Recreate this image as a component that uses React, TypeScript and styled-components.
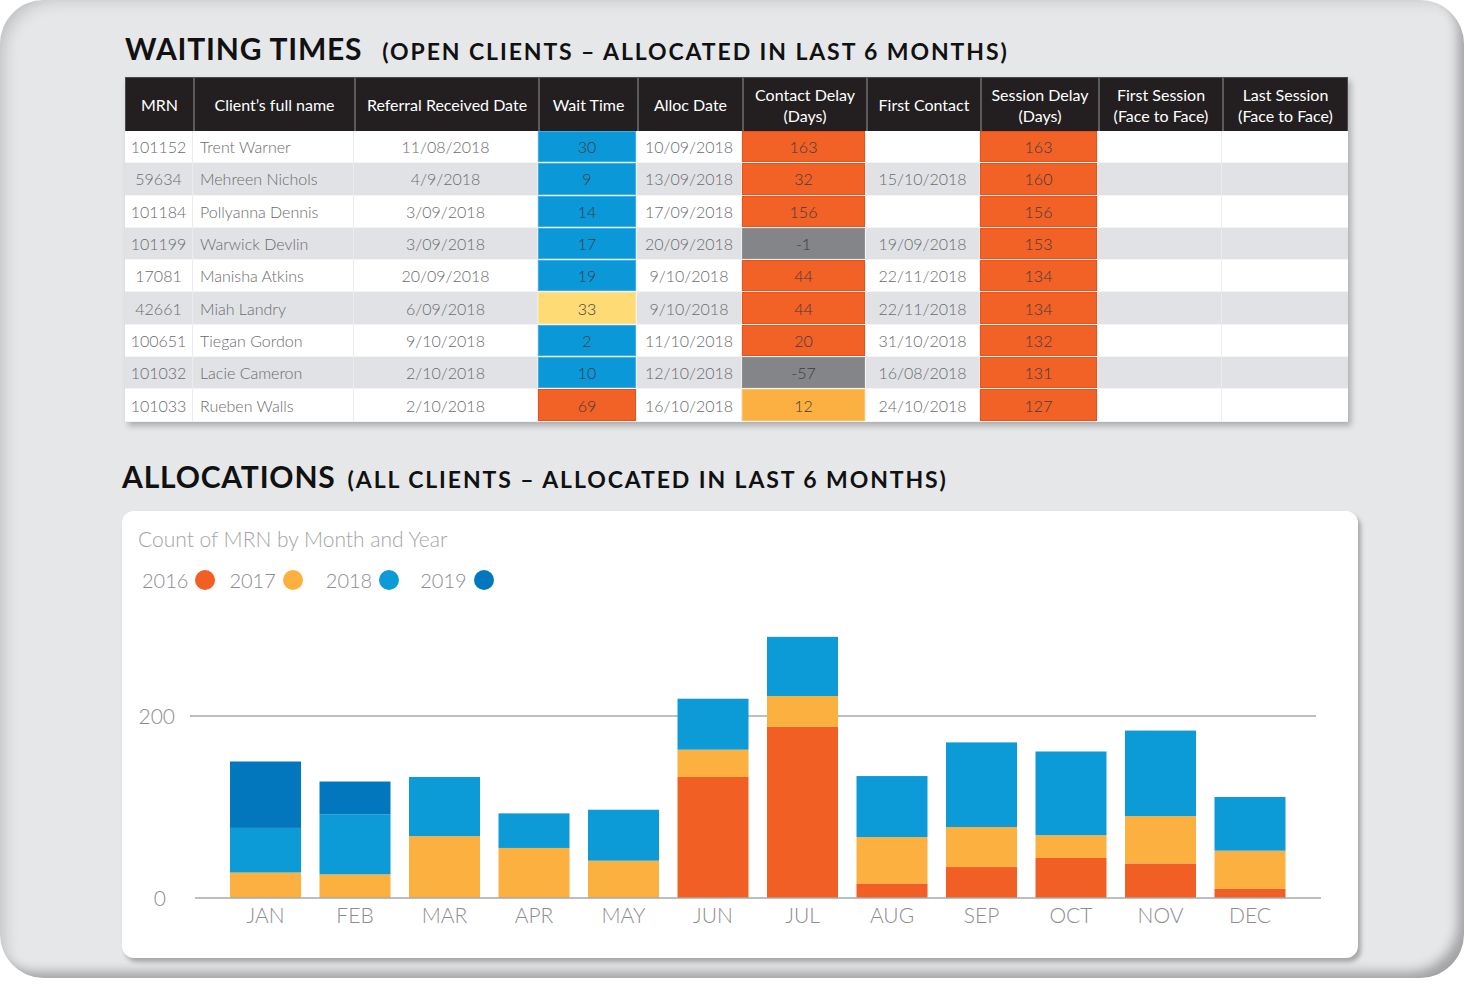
import React from "react";
import styled, { createGlobalStyle } from "styled-components";

const GlobalStyle = createGlobalStyle`
  html, body {
    margin: 0;
    padding: 0;
    background: #ffffff;
  }
  body {
    font-family: Lato, "Open Sans", sans-serif;
  }
`;

type Tone = "blue" | "yellow" | "orange" | "amber" | "grey";

const toneColors: Record<Tone, string> = {
  blue: "#0b98d8",
  yellow: "#fedb75",
  orange: "#f26125",
  amber: "#fbb041",
  grey: "#838588",
};

const toneEdges: Record<Tone, string> = {
  blue: "#3fb0e4",
  yellow: "#fde49a",
  orange: "#e9501a",
  amber: "#fdc15f",
  grey: "#8e9093",
};

type Cell = { value: string; tone?: Tone };

type Row = {
  mrn: string;
  name: string;
  referral: string;
  wait: Cell;
  alloc: string;
  contactDelay: Cell;
  firstContact: string;
  sessionDelay: Cell;
};

const rows: Row[] = [
  { mrn: "101152", name: "Trent Warner", referral: "11/08/2018", wait: { value: "30", tone: "blue" }, alloc: "10/09/2018", contactDelay: { value: "163", tone: "orange" }, firstContact: "", sessionDelay: { value: "163", tone: "orange" } },
  { mrn: "59634", name: "Mehreen Nichols", referral: "4/9/2018", wait: { value: "9", tone: "blue" }, alloc: "13/09/2018", contactDelay: { value: "32", tone: "orange" }, firstContact: "15/10/2018", sessionDelay: { value: "160", tone: "orange" } },
  { mrn: "101184", name: "Pollyanna Dennis", referral: "3/09/2018", wait: { value: "14", tone: "blue" }, alloc: "17/09/2018", contactDelay: { value: "156", tone: "orange" }, firstContact: "", sessionDelay: { value: "156", tone: "orange" } },
  { mrn: "101199", name: "Warwick Devlin", referral: "3/09/2018", wait: { value: "17", tone: "blue" }, alloc: "20/09/2018", contactDelay: { value: "-1", tone: "grey" }, firstContact: "19/09/2018", sessionDelay: { value: "153", tone: "orange" } },
  { mrn: "17081", name: "Manisha Atkins", referral: "20/09/2018", wait: { value: "19", tone: "blue" }, alloc: "9/10/2018", contactDelay: { value: "44", tone: "orange" }, firstContact: "22/11/2018", sessionDelay: { value: "134", tone: "orange" } },
  { mrn: "42661", name: "Miah Landry", referral: "6/09/2018", wait: { value: "33", tone: "yellow" }, alloc: "9/10/2018", contactDelay: { value: "44", tone: "orange" }, firstContact: "22/11/2018", sessionDelay: { value: "134", tone: "orange" } },
  { mrn: "100651", name: "Tiegan Gordon", referral: "9/10/2018", wait: { value: "2", tone: "blue" }, alloc: "11/10/2018", contactDelay: { value: "20", tone: "orange" }, firstContact: "31/10/2018", sessionDelay: { value: "132", tone: "orange" } },
  { mrn: "101032", name: "Lacie Cameron", referral: "2/10/2018", wait: { value: "10", tone: "blue" }, alloc: "12/10/2018", contactDelay: { value: "-57", tone: "grey" }, firstContact: "16/08/2018", sessionDelay: { value: "131", tone: "orange" } },
  { mrn: "101033", name: "Rueben Walls", referral: "2/10/2018", wait: { value: "69", tone: "orange" }, alloc: "16/10/2018", contactDelay: { value: "12", tone: "amber" }, firstContact: "24/10/2018", sessionDelay: { value: "127", tone: "orange" } },
];

const columnWidths = [68, 161, 184, 99, 105, 124, 114, 118, 124, 126];

const Frame = styled.div`
  width: 1464px;
  height: 978px;
  box-sizing: border-box;
  border-radius: 44px;
  background: #e6e7e9;
  box-shadow: inset -12px -12px 12px -6px rgba(0, 0, 0, 0.3),
    inset 12px 8px 18px -10px rgba(0, 0, 0, 0.2);
  padding: 30px 0 0 122px;
`;

const Section = styled.section<{ $indent: number }>`
  margin-left: ${(p) => p.$indent}px;
`;

const Heading = styled.h2<{ $gap: number; $top: number }>`
  margin: ${(p) => p.$top}px 0 0 0;
  display: flex;
  align-items: baseline;
  gap: ${(p) => p.$gap}px;
  font-family: Lato, sans-serif;
  font-weight: 700;
  font-size: 30px;
  line-height: 36px;
  letter-spacing: 0.8px;
  color: #111111;
  text-transform: uppercase;
  white-space: nowrap;
`;

const SubHeading = styled.span`
  font-size: 23px;
  letter-spacing: 1.9px;
`;

const Table = styled.table`
  margin-top: 8px;
  border-collapse: separate;
  border-spacing: 0;
  table-layout: fixed;
  width: 1223px;
  box-shadow: 3px 4px 6px rgba(0, 0, 0, 0.25);
  font-family: Lato, sans-serif;
`;

const HeadCell = styled.th`
  height: 54px;
  box-sizing: border-box;
  padding: 0 2px;
  background: #231f20;
  color: #ffffff;
  font-weight: 400;
  font-size: 16px;
  line-height: 21px;
  text-align: center;
  border-left: 2px solid #5b5b5d;
  border-top: 1px solid #4a4a4a;
  &:first-child {
    border-left: 1px solid #4a4a4a;
  }
  &:last-child {
    border-right: 1px solid #4a4a4a;
  }
`;

const BodyRow = styled.tr<{ $alt: boolean }>`
  height: 32.3px;
  background: ${(p) => (p.$alt ? "#e1e2e5" : "#ffffff")};
`;

const BodyCell = styled.td<{ $tone?: Tone; $align?: "left" | "center" }>`
  box-sizing: border-box;
  padding: ${(p) => (p.$align === "left" ? "0 6px 0 7px" : "0 2px")};
  text-align: ${(p) => p.$align ?? "center"};
  font-size: 16px;
  font-weight: 300;
  color: ${(p) => (p.$tone ? "#3d3d3f" : "#6a6b6e")};
  background: ${(p) => (p.$tone ? toneColors[p.$tone] : "transparent")};
  border-right: 1px solid ${(p) => (p.$tone ? "#f4f4f4" : "#ececec")};
  border-bottom: 1px solid #f4f4f4;
  box-shadow: ${(p) =>
    p.$tone ? `inset 0 0 0 1px ${toneEdges[p.$tone]}` : "none"};
  white-space: nowrap;
  &:last-child {
    border-right: none;
  }
`;

const Card = styled.div`
  margin-top: 14px;
  width: 1236px;
  height: 447px;
  box-sizing: border-box;
  background: #ffffff;
  border-radius: 12px;
  box-shadow: 3px 4px 4px rgba(0, 0, 0, 0.28);
  padding: 15px 0 0 16px;
  font-family: Lato, sans-serif;
`;

const CardTitle = styled.div`
  font-size: 21px;
  line-height: 26px;
  font-weight: 300;
  color: #a3a4a6;
`;

const Legend = styled.div`
  margin: 15px 0 0 4px;
  display: flex;
  align-items: center;
  gap: 14px;
  height: 26px;
`;

const LegendItem = styled.div<{ $shift?: number }>`
  display: flex;
  align-items: center;
  gap: 7px;
  margin-left: ${(p) => p.$shift ?? 0}px;
  font-size: 20px;
  font-weight: 300;
  color: #8c8d90;
`;

const Dot = styled.span<{ $color: string }>`
  width: 20px;
  height: 20px;
  border-radius: 50%;
  background: ${(p) => p.$color};
`;

const Plot = styled.svg`
  display: block;
  margin-top: 7px;
  font-family: Lato, sans-serif;
`;

const yearColors = {
  y2016: "#f15f24",
  y2017: "#fbb040",
  y2018: "#0c9bd7",
  y2019: "#0377bd",
};

const months = [
  { label: "JAN", y2016: 0, y2017: 28, y2018: 49, y2019: 73 },
  { label: "FEB", y2016: 0, y2017: 26, y2018: 66, y2019: 36 },
  { label: "MAR", y2016: 0, y2017: 68, y2018: 65, y2019: 0 },
  { label: "APR", y2016: 0, y2017: 55, y2018: 38, y2019: 0 },
  { label: "MAY", y2016: 0, y2017: 41, y2018: 56, y2019: 0 },
  { label: "JUN", y2016: 133, y2017: 30, y2018: 56, y2019: 0 },
  { label: "JUL", y2016: 188, y2017: 34, y2018: 65, y2019: 0 },
  { label: "AUG", y2016: 16, y2017: 51, y2018: 67, y2019: 0 },
  { label: "SEP", y2016: 34, y2017: 44, y2018: 93, y2019: 0 },
  { label: "OCT", y2016: 44, y2017: 25, y2018: 92, y2019: 0 },
  { label: "NOV", y2016: 38, y2017: 52, y2018: 94, y2019: 0 },
  { label: "DEC", y2016: 10, y2017: 42, y2018: 59, y2019: 0 },
];

const BASE = 298;
const SCALE = 0.91;

const Chart = () => {
  return (
    <Plot width={1220} height={345} viewBox="0 0 1220 345">
      <line x1={52} x2={1178} y1={116} y2={116} stroke="#a7a8aa" strokeWidth={1.5} />
      <text x={37} y={124} textAnchor="end" fontSize={21} fontWeight={300} fill="#8c8d90">
        200
      </text>
      <text x={28} y={306} textAnchor="end" fontSize={21} fontWeight={300} fill="#8c8d90">
        0
      </text>
      {months.map((m, i) => {
        const x = 92 + i * 89.5;
        let y = BASE;
        const segments = (["y2016", "y2017", "y2018", "y2019"] as const).map((key) => {
          const h = m[key] * SCALE;
          y -= h;
          return h > 0 ? (
            <rect key={key} x={x} y={y} width={71} height={h} fill={yearColors[key]} />
          ) : null;
        });
        return (
          <g key={m.label}>
            {segments}
            <text
              x={x + 35.5}
              y={323}
              textAnchor="middle"
              fontSize={21}
              fontWeight={300}
              fill="#8c8d90"
            >
              {m.label}
            </text>
          </g>
        );
      })}
      <line x1={57} x2={1183} y1={BASE} y2={BASE} stroke="#a7a8aa" strokeWidth={1.5} />
    </Plot>
  );
};

export default function App() {
  return (
    <>
      <GlobalStyle />
      <Frame>
        <Section $indent={3}>
          <Heading $gap={20} $top={0}>
            Waiting Times
            <SubHeading>(Open Clients – Allocated in last 6 months)</SubHeading>
          </Heading>
          <Table>
            <colgroup>
              {columnWidths.map((w, i) => (
                <col key={i} style={{ width: w }} />
              ))}
            </colgroup>
            <thead>
              <tr>
                <HeadCell>MRN</HeadCell>
                <HeadCell>Client’s full name</HeadCell>
                <HeadCell>Referral Received Date</HeadCell>
                <HeadCell>Wait Time</HeadCell>
                <HeadCell>Alloc Date</HeadCell>
                <HeadCell>
                  Contact Delay
                  <br />
                  (Days)
                </HeadCell>
                <HeadCell>First Contact</HeadCell>
                <HeadCell>
                  Session Delay
                  <br />
                  (Days)
                </HeadCell>
                <HeadCell>
                  First Session
                  <br />
                  (Face to Face)
                </HeadCell>
                <HeadCell>
                  Last Session
                  <br />
                  (Face to Face)
                </HeadCell>
              </tr>
            </thead>
            <tbody>
              {rows.map((r, i) => (
                <BodyRow key={r.mrn} $alt={i % 2 === 1}>
                  <BodyCell>{r.mrn}</BodyCell>
                  <BodyCell $align="left">{r.name}</BodyCell>
                  <BodyCell>{r.referral}</BodyCell>
                  <BodyCell $tone={r.wait.tone}>{r.wait.value}</BodyCell>
                  <BodyCell>{r.alloc}</BodyCell>
                  <BodyCell $tone={r.contactDelay.tone}>{r.contactDelay.value}</BodyCell>
                  <BodyCell>{r.firstContact}</BodyCell>
                  <BodyCell $tone={r.sessionDelay.tone}>{r.sessionDelay.value}</BodyCell>
                  <BodyCell />
                  <BodyCell />
                </BodyRow>
              ))}
            </tbody>
          </Table>
        </Section>
        <Section $indent={0}>
          <Heading $gap={12} $top={36}>
            Allocations
            <SubHeading>(All Clients – Allocated in last 6 months)</SubHeading>
          </Heading>
          <Card>
            <CardTitle>Count of MRN by Month and Year</CardTitle>
            <Legend>
              <LegendItem>
                2016 <Dot $color={yearColors.y2016} />
              </LegendItem>
              <LegendItem>
                2017 <Dot $color={yearColors.y2017} />
              </LegendItem>
              <LegendItem $shift={9}>
                2018 <Dot $color={yearColors.y2018} />
              </LegendItem>
              <LegendItem $shift={7}>
                2019 <Dot $color={yearColors.y2019} />
              </LegendItem>
            </Legend>
            <Chart />
          </Card>
        </Section>
      </Frame>
    </>
  );
}
